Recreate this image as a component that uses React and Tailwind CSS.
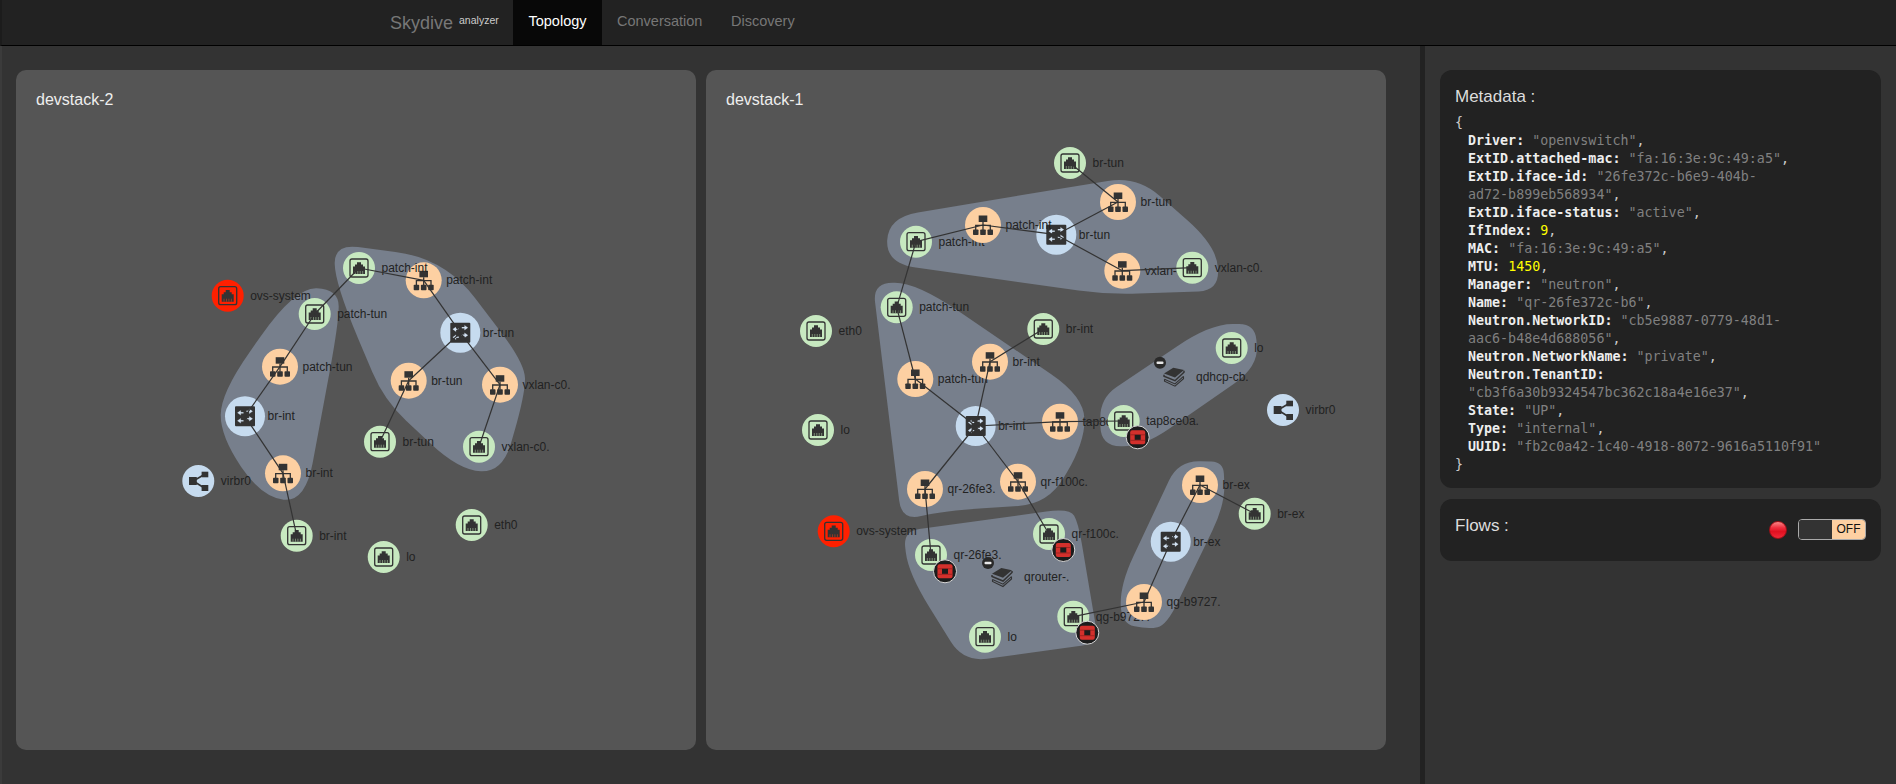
import React from "react";

const C = { green: "#c7e9c0", orange: "#fdd0a2", blue: "#c6dbef", red: "#ff2000", ink: "#333333" };

function roundPoly(points) {
  const n = points.length;
  let d = "";
  for (let i = 0; i < n; i++) {
    const [x, y, r] = points[i];
    const [px, py] = points[(i + n - 1) % n];
    const [nx, ny] = points[(i + 1) % n];
    const l1 = Math.hypot(px - x, py - y);
    const l2 = Math.hypot(nx - x, ny - y);
    const r1 = Math.min(r, l1 / 2);
    const r2 = Math.min(r, l2 / 2);
    const a = [x + ((px - x) * r1) / l1, y + ((py - y) * r1) / l1];
    const b = [x + ((nx - x) * r2) / l2, y + ((ny - y) * r2) / l2];
    d += `${i === 0 ? "M" : "L"}${a[0].toFixed(1)} ${a[1].toFixed(1)} Q${x} ${y} ${b[0].toFixed(1)} ${b[1].toFixed(1)} `;
  }
  return d + "Z";
}

const z = (pts, ox, oy) => pts.map(([x, y, r]) => [ox + x / 3, oy + y / 3, r]);

function PortIcon({ x, y, tooth }) {
  return (
    <g transform={`translate(${x} ${y})`}>
      <rect x="-9" y="-9" width="18" height="18" rx="2" fill="none" stroke={C.ink} strokeWidth="1.3" />
      <path d="M-6 6V-1.5H-4V-3.5H-2V-5.7H2V-3.5H4V-1.5H6V6Z" fill={C.ink} />
      <path d="M-3.7 6V3M-1.2 6V3M1.2 6V3M3.7 6V3" stroke={tooth} strokeWidth="0.6" />
    </g>
  );
}

function TreeIcon({ x, y }) {
  return (
    <g transform={`translate(${x} ${y})`} fill={C.ink}>
      <rect x="-4.3" y="-9.5" width="8.6" height="6.5" />
      <path d="M0 -3V5M-7.3 5V0.3H7.3V5" fill="none" stroke={C.ink} strokeWidth="1.3" />
      <rect x="-10" y="4.5" width="5.5" height="5.5" rx="0.8" />
      <rect x="-2.8" y="4.5" width="5.6" height="5.5" rx="0.8" />
      <rect x="4.5" y="4.5" width="5.5" height="5.5" rx="0.8" />
    </g>
  );
}

function SwitchIcon({ x, y }) {
  return (
    <g transform={`translate(${x} ${y})`}>
      <rect x="-10" y="-10" width="20" height="20" rx="1" fill={C.ink} />
      <g stroke="#d4e4f4" strokeWidth="1.3" fill="#d4e4f4">
        <path d="M-1.5 -3.5H-6" />
        <path d="M-7.5 -3.5L-4.3 -5.8V-1.2Z" strokeWidth="0.3" />
        <path d="M1.5 -5H6" />
        <path d="M7.5 -5L4.3 -7.3V-2.7Z" strokeWidth="0.3" />
        <path d="M-1.5 4.5H-6" />
        <path d="M-7.5 4.5L-4.3 2.2V6.8Z" strokeWidth="0.3" />
        <path d="M1.5 2.5H6" />
        <path d="M7.5 2.5L4.3 0.2V4.8Z" strokeWidth="0.3" />
      </g>
    </g>
  );
}

function ShareIcon({ x, y }) {
  return (
    <g transform={`translate(${x} ${y})`} fill={C.ink}>
      <path d="M-5 0L6 -6.5M-5 0L6 7" stroke={C.ink} strokeWidth="1.6" />
      <rect x="-9.3" y="-4" width="7.8" height="8" />
      <rect x="3.3" y="-9.3" width="6.7" height="5.6" />
      <rect x="3.3" y="4" width="6.7" height="6" />
    </g>
  );
}

function Stack({ x, y }) {
  return (
    <g transform={`translate(${x} ${y})`}>
      <path d="M-10 -3.3L-0.7 -9L10 -6.7L1 0.7Z" fill={C.ink} />
      <path d="M-10 -2V-0.5L1 4L10 -4.5V-6" fill="none" stroke={C.ink} strokeWidth="1.5" />
      <path d="M-9.5 2.5L1 7.2L9.5 -0.3" fill="none" stroke={C.ink} strokeWidth="1.1" />
      <path d="M-9.5 2.5V4.5L1 9.5L9.5 2V-0.3" fill="none" stroke={C.ink} strokeWidth="1.1" />
    </g>
  );
}

function Minus({ x, y }) {
  return (
    <g>
      <circle cx={x} cy={y} r="6" fill="#2a2a2a" />
      <rect x={x - 3.5} y={y - 1.2} width="7" height="2.4" rx="1" fill="#e8e8e8" />
    </g>
  );
}

function Badge({ x, y }) {
  return (
    <g transform={`translate(${x} ${y})`}>
      <circle r="11.5" fill="#1c1c1c" stroke="#d8d8d8" strokeWidth="1" />
      <rect x="-7.5" y="-7" width="15" height="14" rx="2" fill="#d3302c" />
      <rect x="-7.5" y="-3" width="15" height="1" fill="#a02420" />
      <rect x="-7.5" y="2.5" width="15" height="1" fill="#a02420" />
      <rect x="-3" y="-2.5" width="6" height="5" fill="#1c1c1c" />
    </g>
  );
}

function Node({ k, x, y, label }) {
  const r = { port: 16, red: 16, tree: 18, sw: 20, share: 16 }[k];
  const fill = { port: C.green, red: C.red, tree: C.orange, sw: C.blue, share: C.blue }[k];
  return (
    <g>
      <circle cx={x} cy={y} r={r} fill={fill} />
      {k === "port" && <PortIcon x={x} y={y} tooth="#a8c8a0" />}
      {k === "red" && <PortIcon x={x} y={y} tooth="#d04020" />}
      {k === "tree" && <TreeIcon x={x} y={y} />}
      {k === "sw" && <SwitchIcon x={x} y={y} />}
      {k === "share" && <ShareIcon x={x} y={y} />}
      <text x={x + 22.5} y={y + 4} fontSize="12" fill="#222222" fontFamily="'Liberation Sans', sans-serif">
        {label}
      </text>
    </g>
  );
}

function StackNode({ x, y, label }) {
  return (
    <g>
      <Stack x={x} y={y} />
      <text x={x + 22} y={y + 4} fontSize="12" fill="#222222" fontFamily="'Liberation Sans', sans-serif">
        {label}
      </text>
    </g>
  );
}

function Links({ items }) {
  return items.map(([a, b, c, d], i) => (
    <line key={i} x1={a} y1={b} x2={c} y2={d} stroke="#333333" strokeWidth="1.2" />
  ));
}

const HULL = "#777f8c";

const d2 = {
  pInt: [359, 268], oInt: [423.7, 280.3], swTun: [460.3, 332.7], oVx: [500, 384.7], oTun: [408.7, 380.7],
  gTun: [380, 441.7], gVx: [479, 446.7], gPtun: [314.7, 314], oPtun: [280, 366.7], swInt: [245, 416.3],
  oBint: [283, 473.3], gBint: [296.7, 535.7],
};

function Devstack2() {
  const hullA = z([[463, 42, 24], [795, 85, 50], [1034, 400, 40], [1036, 490, 40], [968, 726, 30], [838, 722, 40], [612, 510, 30], [465, 160, 60]], 180, 230);
  const hullB = z([[345, 172, 60], [476, 178, 40], [476, 280, 50], [376, 816, 40], [245, 802, 40], [122, 620, 60], [122, 490, 50]], 180, 230);
  const l = [[d2.pInt, d2.oInt], [d2.oInt, d2.swTun], [d2.swTun, d2.oVx], [d2.swTun, d2.oTun], [d2.oTun, d2.gTun], [d2.oVx, d2.gVx], [d2.pInt, d2.gPtun], [d2.gPtun, d2.oPtun], [d2.oPtun, d2.swInt], [d2.swInt, d2.oBint], [d2.oBint, d2.gBint]].map(([a, b]) => [...a, ...b]);
  return (
    <svg viewBox="16 70 680 680" className="absolute inset-0 w-full h-full">
      <path d={roundPoly(hullA)} fill={HULL} />
      <path d={roundPoly(hullB)} fill={HULL} />
      <Node k="red" x={227.7} y={295.7} label="ovs-system" />
      <Node k="tree" x={423.7} y={280.3} label="patch-int" />
      <Node k="port" x={359} y={268} label="patch-int" />
      <Node k="sw" x={460.3} y={332.7} label="br-tun" />
      <Node k="tree" x={500} y={384.7} label="vxlan-c0." />
      <Node k="tree" x={408.7} y={380.7} label="br-tun" />
      <Node k="port" x={380} y={441.7} label="br-tun" />
      <Node k="port" x={479} y={446.7} label="vxlan-c0." />
      <Node k="port" x={314.7} y={314} label="patch-tun" />
      <Node k="tree" x={280} y={366.7} label="patch-tun" />
      <Node k="sw" x={245} y={416.3} label="br-int" />
      <Node k="tree" x={283} y={473.3} label="br-int" />
      <Node k="share" x={198.3} y={481} label="virbr0" />
      <Node k="port" x={296.7} y={535.7} label="br-int" />
      <Node k="port" x={471.7} y={525} label="eth0" />
      <Node k="port" x={383.7} y={557} label="lo" />
      <Links items={l} />
    </svg>
  );
}

const d1 = {
  gTop: [1070, 163], oTop: [1118, 202], oPi: [983, 225], swTun: [1056.3, 234.7], gPi: [916, 241.7], oVx: [1122.3, 270.7],
  gVx: [1192.3, 267.7], gPt: [896.7, 307.3], gBi: [1043.3, 329], oBi: [990, 361.7], oPt: [915.3, 379], swInt: [975.7, 426],
  oTap: [1060, 421.7], gTap: [1123.7, 421], oQr: [925, 489], oQf: [1018, 481.7], gQf: [1049, 534], gQr: [931, 555],
  gQg: [1073.3, 616.7], oEx: [1200, 485], gEx: [1254.7, 513.7], swEx: [1170.7, 541.7], oQg: [1144, 602],
};

function Devstack1() {
  const hullTop = z([[325, 262, 30], [1072, 138, 30], [1312, 350, 40], [1316, 482, 20], [985, 494, 30], [318, 400, 30]], 780, 130);
  const hullMid = z([[278, 458, 20], [410, 458, 50], [912, 800, 40], [915, 935, 50], [805, 1122, 30], [490, 1143, 40], [365, 1172, 20]], 780, 130);
  const hullQd = z([[1290, 582, 40], [1425, 582, 16], [1436, 710, 30], [1090, 950, 30], [962, 948, 20], [960, 805, 20]], 780, 130);
  const hullBr = z([[1135, 92, 22], [1270, 96, 12], [1276, 222, 30], [1100, 585, 24], [1045, 598, 30], [962, 580, 20], [962, 460, 30]], 800, 430);
  const hullQr = z([[310, 304, 16], [810, 235, 24], [835, 280, 20], [896, 640, 16], [490, 696, 24], [325, 430, 40]], 800, 430);
  const l = [[d1.gTop, d1.oTop], [d1.oTop, d1.swTun], [d1.oPi, d1.swTun], [d1.gPi, d1.oPi], [d1.swTun, d1.oVx], [d1.oVx, d1.gVx], [d1.gPi, d1.gPt], [d1.gPt, d1.oPt], [d1.oPt, d1.swInt], [d1.gBi, d1.oBi], [d1.oBi, d1.swInt], [d1.swInt, d1.oTap], [d1.oTap, d1.gTap], [d1.swInt, d1.oQr], [d1.swInt, d1.oQf], [d1.oQr, d1.gQr], [d1.oQf, d1.gQf], [d1.gQg, d1.oQg], [d1.oQg, d1.swEx], [d1.swEx, d1.oEx], [d1.oEx, d1.gEx]].map(([a, b]) => [...a, ...b]);
  return (
    <svg viewBox="706 70 680 680" className="absolute inset-0 w-full h-full">
      <path d={roundPoly(hullTop)} fill={HULL} />
      <path d={roundPoly(hullMid)} fill={HULL} />
      <path d={roundPoly(hullQd)} fill={HULL} />
      <path d={roundPoly(hullBr)} fill={HULL} />
      <path d={roundPoly(hullQr)} fill={HULL} />
      <Node k="port" x={1070} y={163} label="br-tun" />
      <Node k="tree" x={1118} y={202} label="br-tun" />
      <Node k="sw" x={1056.3} y={234.7} label="br-tun" />
      <Node k="port" x={916} y={241.7} label="patch-int" />
      <Node k="tree" x={983} y={225} label="patch-int" />
      <Node k="tree" x={1122.3} y={270.7} label="vxlan-c0." />
      <Node k="port" x={1192.3} y={267.7} label="vxlan-c0." />
      <Node k="port" x={896.7} y={307.3} label="patch-tun" />
      <Node k="port" x={816} y={331} label="eth0" />
      <Node k="port" x={1043.3} y={329} label="br-int" />
      <Node k="tree" x={915.3} y={379} label="patch-tun" />
      <Node k="tree" x={990} y={361.7} label="br-int" />
      <Node k="port" x={1231.7} y={348} label="lo" />
      <StackNode x={1174} y={376.7} label="qdhcp-cb." />
      <Node k="share" x={1283} y={410} label="virbr0" />
      <Node k="port" x={818} y={430} label="lo" />
      <Node k="sw" x={975.7} y={426} label="br-int" />
      <Node k="tree" x={1060} y={421.7} label="tap8ce0a." />
      <Node k="port" x={1123.7} y={421} label="tap8ce0a." />
      <Node k="tree" x={925} y={489} label="qr-26fe3." />
      <Node k="tree" x={1018} y={481.7} label="qr-f100c." />
      <Node k="red" x={833.7} y={531.3} label="ovs-system" />
      <Node k="port" x={1049} y={534} label="qr-f100c." />
      <Node k="port" x={931} y={555} label="qr-26fe3." />
      <StackNode x={1002} y={577} label="qrouter-." />
      <Node k="port" x={1073.3} y={616.7} label="qg-b9727." />
      <Node k="port" x={985} y={636.7} label="lo" />
      <Node k="tree" x={1200} y={485} label="br-ex" />
      <Node k="port" x={1254.7} y={513.7} label="br-ex" />
      <Node k="sw" x={1170.7} y={541.7} label="br-ex" />
      <Node k="tree" x={1144} y={602} label="qg-b9727." />
      <Links items={l} />
      <Minus x={1160} y={362.7} />
      <Minus x={988} y={563} />
      <Badge x={1137.7} y={437.3} />
      <Badge x={1063.3} y={550} />
      <Badge x={945} y={571.3} />
      <Badge x={1087.3} y={632.7} />
    </svg>
  );
}

function Panel({ title, children }) {
  return (
    <div className="relative w-[680px] h-[680px] rounded-[10px] bg-[#555555]">
      {children}
      <div className="relative pl-5 pt-[20px] text-base leading-[20px] text-[#eeeeee]">{title}</div>
    </div>
  );
}

const K = ({ children }) => <span className="font-bold text-[#eeeeee]">{children}</span>;
const S = ({ children }) => <span className="text-[#808080]">{children}</span>;
const N = ({ children }) => <span className="text-[#ffff00]">{children}</span>;

const rows = [
  [["k", "Driver: "], ["s", '"openvswitch"'], ["p", ","]],
  [["k", "ExtID.attached-mac: "], ["s", '"fa:16:3e:9c:49:a5"'], ["p", ","]],
  [["k", "ExtID.iface-id: "], ["s", '"26fe372c-b6e9-404b-']],
  [["s", 'ad72-b899eb568934"'], ["p", ","]],
  [["k", "ExtID.iface-status: "], ["s", '"active"'], ["p", ","]],
  [["k", "IfIndex: "], ["n", "9"], ["p", ","]],
  [["k", "MAC: "], ["s", '"fa:16:3e:9c:49:a5"'], ["p", ","]],
  [["k", "MTU: "], ["n", "1450"], ["p", ","]],
  [["k", "Manager: "], ["s", '"neutron"'], ["p", ","]],
  [["k", "Name: "], ["s", '"qr-26fe372c-b6"'], ["p", ","]],
  [["k", "Neutron.NetworkID: "], ["s", '"cb5e9887-0779-48d1-']],
  [["s", 'aac6-b48e4d688056"'], ["p", ","]],
  [["k", "Neutron.NetworkName: "], ["s", '"private"'], ["p", ","]],
  [["k", "Neutron.TenantID: "]],
  [["s", '"cb3f6a30b9324547bc362c18a4e16e37"'], ["p", ","]],
  [["k", "State: "], ["s", '"UP"'], ["p", ","]],
  [["k", "Type: "], ["s", '"internal"'], ["p", ","]],
  [["k", "UUID: "], ["s", '"fb2c0a42-1c40-4918-8072-9616a5110f91"']],
];

export default function App() {
  return (
    <div className="h-[784px] w-[1896px] overflow-hidden flex flex-col bg-[#333333] font-['Liberation_Sans',sans-serif]">
      <nav className="h-[46px] shrink-0 flex items-stretch bg-[#222222] border-b border-b-black border-l-2 border-l-[#1c1c1c] pl-[388px]">
        <div className="flex items-start w-[123px] text-[#777777] text-[18px] leading-[46px]">
          Skydive
          <span className="ml-[6px] text-[10.5px] leading-[40px] text-[#cccccc]">analyzer</span>
        </div>
        <div className="w-[89px] bg-[#080808] text-white text-center text-[14.5px] leading-[42px]">Topology</div>
        <div className="ml-[15px] w-[84px] text-[#777777] text-[14.5px] leading-[42px]">Conversation</div>
        <div className="ml-[30px] text-[#777777] text-[14.5px] leading-[42px]">Discovery</div>
      </nav>
      <main className="flex-1 flex min-h-0 border-l-2 border-l-[#3b3b3b]">
        <section className="w-[1418px] shrink-0 flex gap-[10px] pl-[14px] pt-6">
          <Panel title="devstack-2"><Devstack2 /></Panel>
          <Panel title="devstack-1"><Devstack1 /></Panel>
        </section>
        <div className="w-[5px] shrink-0 bg-[#222222]" />
        <aside className="flex-1 pl-[15px] pr-[15px] pt-6 flex flex-col gap-[11px]">
          <div className="h-[418px] rounded-[12px] bg-[#222222] pl-[15px] pt-[17px]">
            <div className="text-[17px] leading-[20px] text-[#dddddd]">Metadata :</div>
            <div className="mt-[7px] font-['DejaVu_Sans_Mono',monospace] text-[13.33px] leading-[18px] whitespace-pre text-[#cccccc]">
              <div>{"{"}</div>
              {rows.map((r, i) => (
                <div key={i} className="pl-[13px]">
                  {r.map(([t, v], j) =>
                    t === "k" ? <K key={j}>{v}</K> : t === "s" ? <S key={j}>{v}</S> : t === "n" ? <N key={j}>{v}</N> : <span key={j}>{v}</span>
                  )}
                </div>
              ))}
              <div>{"}"}</div>
            </div>
          </div>
          <div className="relative h-[62px] rounded-[12px] bg-[#222222] pl-[15px] pt-[17px] text-[17px] leading-[20px] text-[#dddddd]">
            Flows :
            <div className="absolute left-[329px] top-[22px] w-[18px] h-[18px] rounded-full border border-[#a01018] bg-[linear-gradient(#f88888_0%,#f03040_35%,#e01020_60%,#f02838_100%)]" />
            <div className="absolute left-[358px] top-[20px] w-[68px] h-[21px] rounded-[4px] border border-[#aaaaaa] flex overflow-hidden">
              <div className="flex-1 bg-[#333333]" />
              <div className="w-[33px] bg-[#fdd0a2] text-[#111111] text-[12px] leading-[19px] text-center">OFF</div>
            </div>
          </div>
        </aside>
      </main>
    </div>
  );
}
